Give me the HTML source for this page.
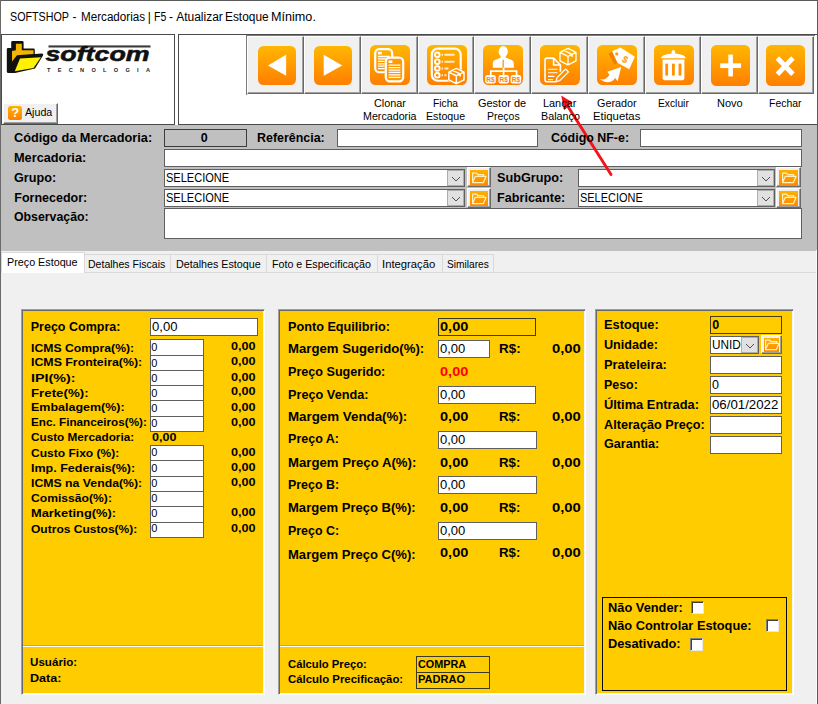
<!DOCTYPE html>
<html lang="pt-BR">
<head>
<meta charset="utf-8">
<title>SOFTSHOP - Mercadorias</title>
<style>
html,body{margin:0;padding:0;}
body{width:818px;height:704px;overflow:hidden;background:#f0f0f0;}
#win{position:relative;width:818px;height:704px;overflow:hidden;background:#f0f0f0;font-family:"Liberation Sans",sans-serif;color:#000;}
#win div,#win svg,#win span.t{position:absolute;box-sizing:border-box;}
.t{white-space:nowrap;font-family:"Liberation Sans",sans-serif;transform-origin:0 0;}
.fld{background:#fff;border:1px solid #5f5f5f;}
.yfld{background:#ffcc00;border:1px solid #3a3a2a;}
.btn{background:#f0f0f0;border-top:1px solid #fff;border-left:1px solid #fff;border-right:1px solid #696969;border-bottom:1px solid #696969;box-shadow:inset -1px -1px 0 #a0a0a0;}
.ico{border-radius:5.5px;background:linear-gradient(#ffb700,#ff9d00 45%,#ff7f00);}
.pan{background:#ffcc00;border-top:1px solid #a0a0a0;border-left:1px solid #a0a0a0;border-right:1px solid #fff;border-bottom:1px solid #fff;box-shadow:inset 1px 1px 0 #66686e,inset -1px -1px 0 #f6f6f6;}
.dd{background:#e1e1e1;border:1px solid #adadad;}
.fico{background:linear-gradient(#ffb000,#ff8a00);}
.chk{background:#fff;border-top:1px solid #808080;border-left:1px solid #808080;border-right:1px solid #e8e8e8;border-bottom:1px solid #e8e8e8;box-shadow:inset 1px 1px 0 #404040;}
.tab{background:#f0f0f0;border:1px solid #d9d9d9;border-bottom:none;}

</style>
</head>
<body>
<div id="win">
<!-- title bar -->
<div style="left:0;top:0;width:818px;height:125px;background:#fff;"></div>
<!-- logo panel -->
<div style="left:1px;top:34px;width:174px;height:91px;border:1px solid #4a4a4a;background:#fff;"></div>
<!-- toolbar panel -->
<div style="left:178px;top:34px;width:640px;height:91px;border:1px solid #4a4a4a;border-right-color:#8a8a8a;background:#fff;"></div>
<!-- LOGO -->
<svg style="left:2px;top:35px;" width="172" height="60" viewBox="2 35 172 60">
  <path d="M6.8 49.2 Q6.8 48 8 48 L11.2 48 L11.2 42.3 Q11.2 41.1 12.5 41.1 L22.4 41.1 Q23.6 41.1 23.6 42.3 L23.6 48.6 L33.5 48.6 Q34.8 48.6 34.8 50 L34.8 53.9 L42 53.5 Q43.8 53.6 43 55.4 L35 68.4 L15 73 L8.5 73 Q6.8 73 6.8 71.5 Z" fill="#111"/>
  <path d="M12 51 L15.9 50.3 L15.9 43.7 L21.8 43.7 L21.8 50.3 L33.5 50.3 L33.5 53.9 L17 55.2 L12 61.5 Z" fill="#f5b400"/>
  <path d="M14.8 71.2 L20 58.6 L40.9 57.2 L33.5 67.9 Z" fill="#fff200"/>
  <rect x="48.5" y="45.4" width="102" height="2.1" fill="#3a3a3a"/>
  <text x="45.5" y="61.3" font-family="Liberation Sans, sans-serif" font-weight="bold" font-style="italic" font-size="20.5" textLength="104" lengthAdjust="spacingAndGlyphs" fill="#111" stroke="#111" stroke-width="0.55">softcom</text>
  <text x="47" y="71.6" font-family="Liberation Sans, sans-serif" font-weight="bold" font-size="5.6" textLength="103" lengthAdjust="spacing" fill="#222">TECNOLOGIA</text>
</svg>
<!-- Ajuda button -->
<div class="btn" style="left:3px;top:103px;width:55px;height:21px;"></div>
<div style="left:8px;top:106px;width:14px;height:14px;border-radius:2.5px;background:linear-gradient(#ffb400,#ff7f00);"></div>
<span class="t" style="left:11.2px;top:106.2px;font-size:13px;line-height:14px;font-weight:bold;color:#fff;">?</span>
<div style="left:246px;top:35px;width:569px;height:60px;border:1px solid #7a7a7a;border-right:none;border-bottom:none;"></div>
<div class="btn" style="left:247px;top:36px;width:57px;height:58px;"></div>
<div class="ico" style="left:258.0px;top:46.3px;width:38px;height:38.5px;"></div>
<svg style="left:258.0px;top:46.3px;" width="38" height="38.5" viewBox="0 0 40 40" preserveAspectRatio="none"><polygon points="10.5,20.2 29.6,9.2 29.6,30.9" fill="#fff"/></svg>
<div class="btn" style="left:304px;top:36px;width:57px;height:58px;"></div>
<div class="ico" style="left:314.1px;top:46.3px;width:38px;height:38.5px;"></div>
<svg style="left:314.1px;top:46.3px;" width="38" height="38.5" viewBox="0 0 40 40" preserveAspectRatio="none"><polygon points="10.2,9.2 29.8,20.2 10.2,30.9" fill="#fff"/></svg>
<div class="btn" style="left:361px;top:36px;width:57px;height:58px;"></div>
<div class="ico" style="left:370.1px;top:44.8px;width:40px;height:40.4px;"></div>
<svg style="left:370.1px;top:44.8px;" width="40" height="40.4" viewBox="0 0 40 40" preserveAspectRatio="none"><rect x="5.2" y="4" width="17" height="23" rx="4" fill="none" stroke="#fff" stroke-width="2.2"/>
<rect x="8" y="6.8" width="3.8" height="2.5" fill="#fff"/>
<path d="M8 11.4H19.6M8 13.8H19.6M8 16.2H14.6M8 18.6H14.6M8 21H14.6M8 23.4H14.6" stroke="#fff" stroke-width="1.3"/>
<rect x="15.8" y="12.5" width="17.4" height="23.5" rx="4" fill="#ff9a00" stroke="#fff" stroke-width="2.2"/>
<rect x="18.6" y="15.3" width="3.8" height="2.5" fill="#fff"/>
<path d="M18.6 20H30.4M18.6 22.4H30.4M18.6 24.8H30.4M18.6 27.2H30.4M18.6 29.6H30.4M18.6 32H30.4" stroke="#fff" stroke-width="1.3"/></svg>
<div class="btn" style="left:418px;top:36px;width:56px;height:58px;"></div>
<div class="ico" style="left:427.0px;top:44.8px;width:40px;height:40.4px;"></div>
<svg style="left:427.0px;top:44.8px;" width="40" height="40.4" viewBox="0 0 40 40" preserveAspectRatio="none"><rect x="4.8" y="3.6" width="28.9" height="31.8" rx="6" fill="none" stroke="#fff" stroke-width="2.2"/>
<circle cx="10.3" cy="9.7" r="2.3" fill="none" stroke="#fff" stroke-width="1.9"/><circle cx="10.3" cy="16.5" r="2.3" fill="none" stroke="#fff" stroke-width="1.9"/>
<circle cx="10.3" cy="23.2" r="2.3" fill="none" stroke="#fff" stroke-width="1.9"/><circle cx="10.3" cy="30" r="2.3" fill="none" stroke="#fff" stroke-width="1.9"/>
<path d="M14.6 9.7H16M17.4 9.7H27.5M14.6 16.5H16M17.4 16.5H27.5M14.6 23.2H16M17.4 23.2H21.5M14.6 30H16M17.4 30H19.5" stroke="#fff" stroke-width="2" opacity=".8"/>
<path d="M29.3 22 L38.2 26.2 V35.2 L29.3 39.4 L20.6 35.2 V26.2 Z" fill="#ff8c00"/>
<path d="M29.3 23.2 L37 26.8 V34.6 L29.3 38.2 L21.8 34.6 V26.8 Z M21.8 26.8 L29.3 30.4 L37 26.8 M29.3 30.4 V38.2 M25.4 25 L33.2 28.6 V31.2" fill="none" stroke="#fff" stroke-width="1.5" stroke-linejoin="round"/></svg>
<div class="btn" style="left:474px;top:36px;width:57px;height:58px;"></div>
<div class="ico" style="left:483.2px;top:44.8px;width:40px;height:40.4px;"></div>
<svg style="left:483.2px;top:44.8px;" width="40" height="40.4" viewBox="0 0 40 40" preserveAspectRatio="none"><ellipse cx="20.2" cy="6.4" rx="4.6" ry="5.3" fill="#fff"/>
<path d="M9.8 22.5 V18.3 Q9.8 15 13.6 14 L17.6 12.6 V10 H22.8 V12.6 L26.8 14 Q30.8 15 30.8 18.3 V22.5 Z" fill="#fff"/>
<path d="M20.2 14.5 V22.5" stroke="#ff9600" stroke-width="1.3"/>
<path d="M7.8 30.5 V25.8 H33.6 V30.5 M20.6 22.5 V30.5" fill="none" stroke="#fff" stroke-width="1.7"/>
<rect x="2.2" y="29.8" width="10.6" height="8.4" rx="2.4" fill="#fff"/><rect x="15.4" y="29.8" width="10.6" height="8.4" rx="2.4" fill="#fff"/><rect x="27.6" y="29.8" width="10.6" height="8.4" rx="2.4" fill="#fff"/>
<text x="7.5" y="36.5" text-anchor="middle" font-family="Liberation Sans, sans-serif" font-weight="bold" font-size="6.6" fill="#ff8400">R$</text>
<text x="20.7" y="36.5" text-anchor="middle" font-family="Liberation Sans, sans-serif" font-weight="bold" font-size="6.6" fill="#ff8400">R$</text>
<text x="32.9" y="36.5" text-anchor="middle" font-family="Liberation Sans, sans-serif" font-weight="bold" font-size="6.6" fill="#ff8400">R$</text></svg>
<div class="btn" style="left:531px;top:36px;width:57px;height:58px;"></div>
<div class="ico" style="left:540.0px;top:44.8px;width:40px;height:40.4px;"></div>
<svg style="left:540.0px;top:44.8px;" width="40" height="40.4" viewBox="0 0 40 40" preserveAspectRatio="none"><path d="M16.4 36.4 H7 Q5 36.4 5 34.4 V15 Q5 13 7 13 H13.6 L20.4 19.8 V26.5 M13.6 13 V19.8 H20.4" fill="none" stroke="#fff" stroke-width="1.6" stroke-linejoin="round"/>
<path d="M8 24H17.5M8 27.5H17.5M8 31H14.5M8 34.2H13" stroke="#fff" stroke-width="1.2"/>
<path d="M16 36.2 L17 32.3 L25.6 23.7 L28.5 26.6 L19.9 35.2 Z" fill="#ff9000" stroke="#fff" stroke-width="1.3" stroke-linejoin="round"/>
<path d="M28 3.4 L36 7.3 V15.7 L28 19.6 L20 15.7 V7.3 Z M20 7.3 L28 11.2 L36 7.3 M28 11.2 V19.6 M24 5.4 L32 9.3 V12" fill="none" stroke="#fff" stroke-width="1.3" stroke-linejoin="round"/></svg>
<div class="btn" style="left:588px;top:36px;width:57px;height:58px;"></div>
<div class="ico" style="left:596.9px;top:44.8px;width:40px;height:40.4px;"></div>
<svg style="left:596.9px;top:44.8px;" width="40" height="40.4" viewBox="0 0 40 40" preserveAspectRatio="none"><polygon points="11.6,8.6 15.2,6.2 20.6,17.6 17.4,19.6" fill="#f08000"/>
<polygon points="15.1,6.3 23.4,2.5 37.9,11.6 32.2,24 20.5,17.5" fill="#fff"/>
<circle cx="19.8" cy="8.9" r="1.6" fill="#ff9a00"/>
<text x="0" y="0" transform="translate(24.2,15.8) rotate(30)" font-family="Liberation Sans, sans-serif" font-weight="bold" font-size="9.5" fill="#ff9a00">$</text>
<path d="M1.8 33 Q8 36.5 12.4 29.5 L10.4 26.4 L24.2 21.8 L20.6 35.8 L18.2 32.6 Q12 41 1.8 33 Z" fill="#fff"/></svg>
<div class="btn" style="left:645px;top:36px;width:56px;height:58px;"></div>
<div class="ico" style="left:654.0px;top:44.8px;width:40px;height:40.4px;"></div>
<svg style="left:654.0px;top:44.8px;" width="40" height="40.4" viewBox="0 0 40 40" preserveAspectRatio="none"><path d="M7 13 Q7 9.6 17.6 8.3 Q17.4 5 19.4 5 Q21.4 5 21.2 8.3 Q31.8 9.6 31.8 13 Z" fill="#fff"/>
<path d="M8.6 14.4 H30.4 V33 Q30.4 34.8 28.6 34.8 H10.4 Q8.6 34.8 8.6 33 Z" fill="#fff"/>
<rect x="11.3" y="18.2" width="2.8" height="12.2" rx="1.2" fill="#ff9200"/><rect x="18" y="18.2" width="2.8" height="12.2" rx="1.2" fill="#ff9200"/><rect x="24.6" y="18.2" width="2.8" height="12.2" rx="1.2" fill="#ff9200"/></svg>
<div class="btn" style="left:701px;top:36px;width:57px;height:58px;"></div>
<div class="ico" style="left:710.6px;top:44.8px;width:39.3px;height:41.2px;"></div>
<svg style="left:710.6px;top:44.8px;" width="39.3" height="41.2" viewBox="0 0 40 40" preserveAspectRatio="none"><rect x="9.4" y="17.8" width="21.2" height="4.6" fill="#fff"/><rect x="17.6" y="9.3" width="4.7" height="21.2" fill="#fff"/></svg>
<div class="btn" style="left:758px;top:36px;width:56px;height:58px;"></div>
<div class="ico" style="left:765.9px;top:44.8px;width:39.3px;height:41.2px;"></div>
<svg style="left:765.9px;top:44.8px;" width="39.3" height="41.2" viewBox="0 0 40 40" preserveAspectRatio="none"><path d="M11.6 12.6 L27.4 28.4 M27.4 12.6 L11.6 28.4" stroke="#fff" stroke-width="5" fill="none"/></svg>
<div style="left:1px;top:125px;width:816px;height:126px;background:#c0c0c0;"></div>
<div style="left:164px;top:129px;width:83px;height:18px;border:1px solid #3c3c3c;background:#c0c0c0;"></div>
<div class="fld" style="left:337px;top:129px;width:201px;height:18px;"></div>
<div class="fld" style="left:640px;top:129px;width:162px;height:18px;"></div>
<div class="fld" style="left:164px;top:149px;width:638px;height:18px;"></div>
<div class="fld" style="left:164px;top:169px;width:301px;height:18px;"></div>
<div class="fld" style="left:164px;top:189px;width:301px;height:18px;"></div>
<div class="fld" style="left:578px;top:169px;width:197px;height:18px;"></div>
<div class="fld" style="left:578px;top:189px;width:197px;height:18px;"></div>
<div class="fld" style="left:164px;top:208px;width:638px;height:31px;"></div>
<div class="dd" style="left:447px;top:170px;width:17px;height:16px;"></div><svg style="left:450.5px;top:175.5px;" width="10" height="6" viewBox="0 0 10 6"><path d="M1 1 L5 5 L9 1" fill="none" stroke="#505050" stroke-width="1"/></svg>
<div class="dd" style="left:447px;top:190px;width:17px;height:16px;"></div><svg style="left:450.5px;top:195.5px;" width="10" height="6" viewBox="0 0 10 6"><path d="M1 1 L5 5 L9 1" fill="none" stroke="#505050" stroke-width="1"/></svg>
<div class="dd" style="left:757px;top:170px;width:17px;height:16px;"></div><svg style="left:760.5px;top:175.5px;" width="10" height="6" viewBox="0 0 10 6"><path d="M1 1 L5 5 L9 1" fill="none" stroke="#505050" stroke-width="1"/></svg>
<div class="dd" style="left:757px;top:190px;width:17px;height:16px;"></div><svg style="left:760.5px;top:195.5px;" width="10" height="6" viewBox="0 0 10 6"><path d="M1 1 L5 5 L9 1" fill="none" stroke="#505050" stroke-width="1"/></svg>
<div class="btn" style="left:467px;top:167px;width:24px;height:20px;"></div><div class="fico" style="left:470px;top:169.5px;width:18px;height:15px;"></div><svg style="left:470.0px;top:169.5px;" width="18" height="15" viewBox="0 0 18 15"><path d="M2.6 12.6 V3.2 H6.6 L7.8 4.6 H13.6 V6.4 M2.6 12.6 L5.2 6.4 H16 L13.4 12.6 Z" fill="none" stroke="#fff2c0" stroke-width="1.2" stroke-linejoin="round"/></svg>
<div class="btn" style="left:467px;top:188px;width:24px;height:20px;"></div><div class="fico" style="left:470px;top:190.5px;width:18px;height:15px;"></div><svg style="left:470.0px;top:190.5px;" width="18" height="15" viewBox="0 0 18 15"><path d="M2.6 12.6 V3.2 H6.6 L7.8 4.6 H13.6 V6.4 M2.6 12.6 L5.2 6.4 H16 L13.4 12.6 Z" fill="none" stroke="#fff2c0" stroke-width="1.2" stroke-linejoin="round"/></svg>
<div class="btn" style="left:776px;top:167px;width:25px;height:20px;"></div><div class="fico" style="left:779px;top:169.5px;width:19px;height:15px;"></div><svg style="left:779.5px;top:169.5px;" width="18" height="15" viewBox="0 0 18 15"><path d="M2.6 12.6 V3.2 H6.6 L7.8 4.6 H13.6 V6.4 M2.6 12.6 L5.2 6.4 H16 L13.4 12.6 Z" fill="none" stroke="#fff2c0" stroke-width="1.2" stroke-linejoin="round"/></svg>
<div class="btn" style="left:776px;top:188px;width:25px;height:20px;"></div><div class="fico" style="left:779px;top:190.5px;width:19px;height:15px;"></div><svg style="left:779.5px;top:190.5px;" width="18" height="15" viewBox="0 0 18 15"><path d="M2.6 12.6 V3.2 H6.6 L7.8 4.6 H13.6 V6.4 M2.6 12.6 L5.2 6.4 H16 L13.4 12.6 Z" fill="none" stroke="#fff2c0" stroke-width="1.2" stroke-linejoin="round"/></svg>
<div style="left:1px;top:251px;width:816px;height:22px;background:#f0f0f0;"></div>
<div class="tab" style="left:84px;top:254px;width:87px;height:19px;"></div>
<div class="tab" style="left:170px;top:254px;width:97px;height:19px;"></div>
<div class="tab" style="left:266px;top:254px;width:112px;height:19px;"></div>
<div class="tab" style="left:377px;top:254px;width:65.5px;height:19px;"></div>
<div class="tab" style="left:441.5px;top:254px;width:52.0px;height:19px;"></div>
<div style="left:1px;top:252px;width:84px;height:21px;background:#fff;border:1px solid #d9d9d9;border-bottom:none;"></div>
<div style="left:85px;top:272px;width:732px;height:1px;background:#dadada;"></div>
<div class="pan" style="left:21px;top:309px;width:244px;height:386px;"></div>
<div class="pan" style="left:278px;top:309px;width:308px;height:386px;"></div>
<div class="pan" style="left:595px;top:309px;width:199px;height:386px;"></div>
<div style="left:23px;top:645px;width:240px;height:1px;background:#a6a6a6;"></div><div style="left:23px;top:646px;width:240px;height:1px;background:#fff;"></div>
<div style="left:280px;top:645px;width:304px;height:1px;background:#a6a6a6;"></div><div style="left:280px;top:646px;width:304px;height:1px;background:#fff;"></div>
<div class="fld" style="left:150px;top:318px;width:108px;height:18px;"></div>
<div class="fld" style="left:150px;top:339px;width:54px;height:17px;"></div>
<div class="fld" style="left:150px;top:355px;width:54px;height:16px;"></div>
<div class="fld" style="left:150px;top:370px;width:54px;height:16px;"></div>
<div class="fld" style="left:150px;top:385px;width:54px;height:16px;"></div>
<div class="fld" style="left:150px;top:400px;width:54px;height:17px;"></div>
<div class="fld" style="left:150px;top:416px;width:54px;height:16px;"></div>
<div class="fld" style="left:150px;top:445px;width:54px;height:16px;"></div>
<div class="fld" style="left:150px;top:460px;width:54px;height:17px;"></div>
<div class="fld" style="left:150px;top:476px;width:54px;height:16px;"></div>
<div class="fld" style="left:150px;top:491px;width:54px;height:16px;"></div>
<div class="fld" style="left:150px;top:506px;width:54px;height:17px;"></div>
<div class="fld" style="left:150px;top:522px;width:54px;height:16px;"></div>
<div class="yfld" style="left:438px;top:318px;width:98px;height:18px;"></div>
<div class="fld" style="left:438px;top:340px;width:52px;height:18px;"></div>
<div class="fld" style="left:438px;top:386px;width:98px;height:18px;"></div>
<div class="fld" style="left:438px;top:431px;width:99px;height:18px;"></div>
<div class="fld" style="left:438px;top:476px;width:99px;height:18px;"></div>
<div class="fld" style="left:438px;top:522px;width:99px;height:18px;"></div>
<div class="yfld" style="left:416px;top:656px;width:74px;height:17px;"></div>
<div class="yfld" style="left:416px;top:672px;width:74px;height:17px;"></div>
<div class="yfld" style="left:710px;top:316px;width:72px;height:18px;border-color:#4a3d10;"></div>
<div class="fld" style="left:710px;top:336px;width:49px;height:18px;"></div>
<div class="dd" style="left:741px;top:337px;width:17px;height:16px;"></div><svg style="left:744.5px;top:342.5px;" width="10" height="6" viewBox="0 0 10 6"><path d="M1 1 L5 5 L9 1" fill="none" stroke="#505050" stroke-width="1"/></svg>
<div class="btn" style="left:761px;top:335px;width:21px;height:19px;"></div><div class="fico" style="left:764px;top:337.5px;width:15px;height:14px;"></div><svg style="left:762.5px;top:337.0px;" width="18" height="15" viewBox="0 0 18 15"><path d="M2.6 12.6 V3.2 H6.6 L7.8 4.6 H13.6 V6.4 M2.6 12.6 L5.2 6.4 H16 L13.4 12.6 Z" fill="none" stroke="#fff2c0" stroke-width="1.2" stroke-linejoin="round"/></svg>
<div class="fld" style="left:710px;top:356px;width:72px;height:18px;"></div>
<div class="fld" style="left:710px;top:376px;width:72px;height:18px;"></div>
<div class="fld" style="left:710px;top:396px;width:72px;height:18px;"></div>
<div class="fld" style="left:710px;top:416px;width:72px;height:18px;"></div>
<div class="fld" style="left:710px;top:436px;width:72px;height:18px;"></div>
<div style="left:602px;top:597px;width:185px;height:94px;border:1px solid #0a0800;"></div>
<div class="chk" style="left:691px;top:601px;width:13px;height:13px;"></div>
<div class="chk" style="left:766px;top:619px;width:13px;height:13px;"></div>
<div class="chk" style="left:690px;top:638px;width:13px;height:13px;"></div>
<div style="left:0;top:0;width:818px;height:1px;background:#5a5a5a;"></div>
<div style="left:0;top:0;width:1px;height:704px;background:#6a6a6a;"></div>
<div style="left:817px;top:0;width:1px;height:704px;background:#5a5a5a;"></div>
<div style="left:816px;top:250px;width:1px;height:454px;background:#fafafa;"></div>
<svg style="left:540px;top:85px;" width="90" height="100" viewBox="540 85 90 100"><path d="M611 174.6 L567 105" stroke="#f5121a" stroke-width="2.9" stroke-linecap="round" fill="none"/><polygon points="561.2,95.6 572.6,102.6 564.2,110.2" fill="#f5121a"/></svg>
<!-- text layer -->
<div id="caption" style="left:0;top:0;width:400px;height:33px;"><span class="t" style="left:10.36px;top:11.14px;font-size:12px;line-height:12px;transform:scaleX(0.8935);">SOFTSHOP</span> <span class="t" style="left:72.48px;top:11.14px;font-size:12px;line-height:12px;">-</span> <span class="t" style="left:80.50px;top:11.14px;font-size:12px;line-height:12px;transform:scaleX(0.9707);">Mercadorias</span> <span class="t" style="left:147.68px;top:11.14px;font-size:12px;line-height:12px;">|</span> <span class="t" style="left:153.77px;top:11.14px;font-size:12px;line-height:12px;transform:scaleX(0.8747);">F5</span> <span class="t" style="left:168.88px;top:11.14px;font-size:12px;line-height:12px;">-</span> <span class="t" style="left:176.18px;top:11.14px;font-size:12px;line-height:12px;">Atualizar</span> <span class="t" style="left:225.29px;top:11.14px;font-size:12px;line-height:12px;transform:scaleX(0.9905);">Estoque</span> <span class="t" style="left:271.44px;top:11.14px;font-size:12px;line-height:12px;transform:scaleX(1.0522);">Mínimo.</span></div>
<span class="t" style="left:373.85px;top:98.29px;font-size:11px;line-height:11px;transform:scaleX(0.9844);">Clonar</span>
<span class="t" style="left:363.16px;top:111.09px;font-size:11px;line-height:11px;transform:scaleX(0.9719);">Mercadoria</span>
<span class="t" style="left:433.39px;top:98.29px;font-size:11px;line-height:11px;transform:scaleX(0.9302);">Ficha</span>
<span class="t" style="left:426.36px;top:111.09px;font-size:11px;line-height:11px;transform:scaleX(0.9679);">Estoque</span>
<span class="t" style="left:477.94px;top:98.29px;font-size:11px;line-height:11px;transform:scaleX(0.9959);">Gestor de</span>
<span class="t" style="left:487.17px;top:111.09px;font-size:11px;line-height:11px;transform:scaleX(0.9535);">Preços</span>
<span class="t" style="left:543.35px;top:98.29px;font-size:11px;line-height:11px;transform:scaleX(0.9901);">Lançar</span>
<span class="t" style="left:540.55px;top:111.09px;font-size:11px;line-height:11px;transform:scaleX(0.9780);">Balanço</span>
<span class="t" style="left:596.50px;top:98.29px;font-size:11px;line-height:11px;transform:scaleX(0.9811);">Gerador</span>
<span class="t" style="left:593.02px;top:111.09px;font-size:11px;line-height:11px;transform:scaleX(1.0324);">Etiquetas</span>
<span class="t" style="left:657.78px;top:98.29px;font-size:11px;line-height:11px;transform:scaleX(0.9339);">Excluir</span>
<span class="t" style="left:716.99px;top:98.29px;font-size:11px;line-height:11px;">Novo</span>
<span class="t" style="left:769.12px;top:98.29px;font-size:11px;line-height:11px;transform:scaleX(0.9505);">Fechar</span>
<span class="t" style="left:25.36px;top:106.89px;font-size:11px;line-height:11px;transform:scaleX(0.9694);">Ajuda</span>
<span class="t" style="left:14.24px;top:132.02px;font-size:12.5px;line-height:12.5px;transform:scaleX(1.0199);font-weight:bold;">Código da Mercadoria:</span>
<span class="t" style="left:14.24px;top:151.52px;font-size:12.5px;line-height:12.5px;transform:scaleX(1.0193);font-weight:bold;">Mercadoria:</span>
<span class="t" style="left:14.24px;top:171.52px;font-size:12.5px;line-height:12.5px;transform:scaleX(1.0107);font-weight:bold;">Grupo:</span>
<span class="t" style="left:14.25px;top:191.52px;font-size:12.5px;line-height:12.5px;font-weight:bold;">Fornecedor:</span>
<span class="t" style="left:14.26px;top:210.52px;font-size:12.5px;line-height:12.5px;transform:scaleX(0.9861);font-weight:bold;">Observação:</span>
<span class="t" style="left:257.25px;top:132.02px;font-size:12.5px;line-height:12.5px;transform:scaleX(0.9941);font-weight:bold;">Referência:</span>
<span class="t" style="left:550.65px;top:132.02px;font-size:12.5px;line-height:12.5px;transform:scaleX(0.9952);font-weight:bold;">Código NF-e:</span>
<span class="t" style="left:497.24px;top:171.52px;font-size:12.5px;line-height:12.5px;transform:scaleX(1.0147);font-weight:bold;">SubGrupo:</span>
<span class="t" style="left:497.24px;top:191.52px;font-size:12.5px;line-height:12.5px;transform:scaleX(1.0123);font-weight:bold;">Fabricante:</span>
<span class="t" style="left:200.85px;top:132.32px;font-size:12.5px;line-height:12.5px;font-weight:bold;">0</span>
<span class="t" style="left:165.64px;top:172.44px;font-size:12px;line-height:12px;transform:scaleX(0.9203);">SELECIONE</span>
<span class="t" style="left:165.64px;top:192.44px;font-size:12px;line-height:12px;transform:scaleX(0.9203);">SELECIONE</span>
<span class="t" style="left:579.54px;top:192.44px;font-size:12px;line-height:12px;transform:scaleX(0.9128);">SELECIONE</span>
<span class="t" style="left:6.65px;top:256.99px;font-size:11px;line-height:11px;transform:scaleX(0.9783);">Preço Estoque</span>
<span class="t" style="left:87.77px;top:258.69px;font-size:11px;line-height:11px;transform:scaleX(0.9574);">Detalhes Fiscais</span>
<span class="t" style="left:175.96px;top:258.69px;font-size:11px;line-height:11px;transform:scaleX(0.9752);">Detalhes Estoque</span>
<span class="t" style="left:271.56px;top:258.69px;font-size:11px;line-height:11px;transform:scaleX(0.9692);">Foto e Especificação</span>
<span class="t" style="left:382.32px;top:258.69px;font-size:11px;line-height:11px;transform:scaleX(1.0244);">Integração</span>
<span class="t" style="left:446.79px;top:258.69px;font-size:11px;line-height:11px;transform:scaleX(0.9245);">Similares</span>
<span class="t" style="left:30.75px;top:320.82px;font-size:12.5px;line-height:12.5px;font-weight:bold;">Preço Compra:</span>
<span class="t" style="left:151.91px;top:321.44px;font-size:12px;line-height:12px;transform:scaleX(1.0904);">0,00</span>
<span class="t" style="left:30.77px;top:342.67px;font-size:11.5px;line-height:11.5px;transform:scaleX(1.0622);font-weight:bold;">ICMS Compra(%):</span>
<span class="t" style="left:151.24px;top:342.29px;font-size:11px;line-height:11px;">0</span>
<span class="t" style="left:230.64px;top:341.37px;font-size:11.5px;line-height:11.5px;transform:scaleX(1.0994);font-weight:bold;">0,00</span>
<span class="t" style="left:30.76px;top:356.87px;font-size:11.5px;line-height:11.5px;transform:scaleX(1.0742);font-weight:bold;">ICMS Fronteira(%):</span>
<span class="t" style="left:151.24px;top:357.69px;font-size:11px;line-height:11px;">0</span>
<span class="t" style="left:230.64px;top:356.47px;font-size:11.5px;line-height:11.5px;transform:scaleX(1.0994);font-weight:bold;">0,00</span>
<span class="t" style="left:30.64px;top:372.57px;font-size:11.5px;line-height:11.5px;transform:scaleX(1.2470);font-weight:bold;">IPI(%):</span>
<span class="t" style="left:151.24px;top:372.79px;font-size:11px;line-height:11px;">0</span>
<span class="t" style="left:230.64px;top:371.57px;font-size:11.5px;line-height:11.5px;transform:scaleX(1.0994);font-weight:bold;">0,00</span>
<span class="t" style="left:30.70px;top:387.97px;font-size:11.5px;line-height:11.5px;transform:scaleX(1.1555);font-weight:bold;">Frete(%):</span>
<span class="t" style="left:151.24px;top:387.89px;font-size:11px;line-height:11px;">0</span>
<span class="t" style="left:230.64px;top:386.47px;font-size:11.5px;line-height:11.5px;transform:scaleX(1.0994);font-weight:bold;">0,00</span>
<span class="t" style="left:30.75px;top:402.47px;font-size:11.5px;line-height:11.5px;transform:scaleX(1.0860);font-weight:bold;">Embalagem(%):</span>
<span class="t" style="left:151.24px;top:403.09px;font-size:11px;line-height:11px;">0</span>
<span class="t" style="left:230.64px;top:401.67px;font-size:11.5px;line-height:11.5px;transform:scaleX(1.0994);font-weight:bold;">0,00</span>
<span class="t" style="left:30.80px;top:417.37px;font-size:11.5px;line-height:11.5px;transform:scaleX(1.0190);font-weight:bold;">Enc. Financeiros(%):</span>
<span class="t" style="left:151.24px;top:418.29px;font-size:11px;line-height:11px;">0</span>
<span class="t" style="left:230.64px;top:416.87px;font-size:11.5px;line-height:11.5px;transform:scaleX(1.0994);font-weight:bold;">0,00</span>
<span class="t" style="left:30.78px;top:447.57px;font-size:11.5px;line-height:11.5px;transform:scaleX(1.0464);font-weight:bold;">Custo Fixo (%):</span>
<span class="t" style="left:151.24px;top:447.49px;font-size:11px;line-height:11px;">0</span>
<span class="t" style="left:230.64px;top:446.57px;font-size:11.5px;line-height:11.5px;transform:scaleX(1.0994);font-weight:bold;">0,00</span>
<span class="t" style="left:30.75px;top:462.77px;font-size:11.5px;line-height:11.5px;transform:scaleX(1.0870);font-weight:bold;">Imp. Federais(%):</span>
<span class="t" style="left:151.24px;top:462.69px;font-size:11px;line-height:11px;">0</span>
<span class="t" style="left:230.64px;top:461.77px;font-size:11.5px;line-height:11.5px;transform:scaleX(1.0994);font-weight:bold;">0,00</span>
<span class="t" style="left:30.76px;top:477.67px;font-size:11.5px;line-height:11.5px;transform:scaleX(1.0674);font-weight:bold;">ICMS na Venda(%):</span>
<span class="t" style="left:151.24px;top:477.79px;font-size:11px;line-height:11px;">0</span>
<span class="t" style="left:230.64px;top:476.87px;font-size:11.5px;line-height:11.5px;transform:scaleX(1.0994);font-weight:bold;">0,00</span>
<span class="t" style="left:30.77px;top:493.47px;font-size:11.5px;line-height:11.5px;transform:scaleX(1.0557);font-weight:bold;">Comissão(%):</span>
<span class="t" style="left:151.24px;top:493.29px;font-size:11px;line-height:11px;">0</span>
<span class="t" style="left:30.73px;top:508.47px;font-size:11.5px;line-height:11.5px;transform:scaleX(1.1185);font-weight:bold;">Marketing(%):</span>
<span class="t" style="left:151.24px;top:508.29px;font-size:11px;line-height:11px;">0</span>
<span class="t" style="left:230.64px;top:507.47px;font-size:11.5px;line-height:11.5px;transform:scaleX(1.0994);font-weight:bold;">0,00</span>
<span class="t" style="left:30.78px;top:523.57px;font-size:11.5px;line-height:11.5px;transform:scaleX(1.0468);font-weight:bold;">Outros Custos(%):</span>
<span class="t" style="left:151.24px;top:523.49px;font-size:11px;line-height:11px;">0</span>
<span class="t" style="left:230.64px;top:522.57px;font-size:11.5px;line-height:11.5px;transform:scaleX(1.0994);font-weight:bold;">0,00</span>
<span class="t" style="left:30.80px;top:432.17px;font-size:11.5px;line-height:11.5px;transform:scaleX(1.0212);font-weight:bold;">Custo Mercadoria:</span>
<span class="t" style="left:151.85px;top:432.07px;font-size:11.5px;line-height:11.5px;transform:scaleX(1.0899);font-weight:bold;">0,00</span>
<span class="t" style="left:29.60px;top:657.37px;font-size:11.5px;line-height:11.5px;transform:scaleX(1.0094);font-weight:bold;">Usuário:</span>
<span class="t" style="left:29.54px;top:673.27px;font-size:11.5px;line-height:11.5px;transform:scaleX(1.0955);font-weight:bold;">Data:</span>
<span class="t" style="left:288.04px;top:321.32px;font-size:12.5px;line-height:12.5px;transform:scaleX(1.0132);font-weight:bold;">Ponto Equilibrio:</span>
<span class="t" style="left:288.01px;top:342.82px;font-size:12.5px;line-height:12.5px;transform:scaleX(1.0541);font-weight:bold;">Margem Sugerido(%):</span>
<span class="t" style="left:288.04px;top:365.52px;font-size:12.5px;line-height:12.5px;transform:scaleX(1.0079);font-weight:bold;">Preço Sugerido:</span>
<span class="t" style="left:288.04px;top:388.62px;font-size:12.5px;line-height:12.5px;transform:scaleX(1.0167);font-weight:bold;">Preço Venda:</span>
<span class="t" style="left:288.00px;top:411.32px;font-size:12.5px;line-height:12.5px;transform:scaleX(1.0667);font-weight:bold;">Margem Venda(%):</span>
<span class="t" style="left:288.05px;top:433.42px;font-size:12.5px;line-height:12.5px;font-weight:bold;">Preço A:</span>
<span class="t" style="left:288.01px;top:457.42px;font-size:12.5px;line-height:12.5px;transform:scaleX(1.0532);font-weight:bold;">Margem Preço A(%):</span>
<span class="t" style="left:288.05px;top:478.52px;font-size:12.5px;line-height:12.5px;transform:scaleX(0.9939);font-weight:bold;">Preço B:</span>
<span class="t" style="left:288.02px;top:502.42px;font-size:12.5px;line-height:12.5px;transform:scaleX(1.0443);font-weight:bold;">Margem Preço B(%):</span>
<span class="t" style="left:288.05px;top:524.62px;font-size:12.5px;line-height:12.5px;transform:scaleX(0.9939);font-weight:bold;">Preço C:</span>
<span class="t" style="left:288.02px;top:548.52px;font-size:12.5px;line-height:12.5px;transform:scaleX(1.0443);font-weight:bold;">Margem Preço C(%):</span>
<span class="t" style="left:439.93px;top:320.82px;font-size:12.5px;line-height:12.5px;transform:scaleX(1.1644);font-weight:bold;">0,00</span>
<span class="t" style="left:440.02px;top:343.24px;font-size:12px;line-height:12px;transform:scaleX(1.0858);">0,00</span>
<span class="t" style="left:499.00px;top:342.62px;font-size:12.5px;line-height:12.5px;transform:scaleX(1.0720);font-weight:bold;">R$:</span>
<span class="t" style="left:551.81px;top:342.62px;font-size:12.5px;line-height:12.5px;transform:scaleX(1.1863);font-weight:bold;">0,00</span>
<span class="t" style="left:439.93px;top:365.52px;font-size:12.5px;line-height:12.5px;transform:scaleX(1.1644);font-weight:bold;color:#ff0000;">0,00</span>
<span class="t" style="left:440.02px;top:388.84px;font-size:12px;line-height:12px;transform:scaleX(1.0858);">0,00</span>
<span class="t" style="left:439.93px;top:410.52px;font-size:12.5px;line-height:12.5px;transform:scaleX(1.1644);font-weight:bold;">0,00</span>
<span class="t" style="left:499.20px;top:410.72px;font-size:12.5px;line-height:12.5px;transform:scaleX(1.0613);font-weight:bold;">R$:</span>
<span class="t" style="left:551.81px;top:410.52px;font-size:12.5px;line-height:12.5px;transform:scaleX(1.1863);font-weight:bold;">0,00</span>
<span class="t" style="left:439.93px;top:456.92px;font-size:12.5px;line-height:12.5px;transform:scaleX(1.1644);font-weight:bold;">0,00</span>
<span class="t" style="left:499.20px;top:457.12px;font-size:12.5px;line-height:12.5px;transform:scaleX(1.0613);font-weight:bold;">R$:</span>
<span class="t" style="left:551.81px;top:456.92px;font-size:12.5px;line-height:12.5px;transform:scaleX(1.1863);font-weight:bold;">0,00</span>
<span class="t" style="left:439.93px;top:501.72px;font-size:12.5px;line-height:12.5px;transform:scaleX(1.1644);font-weight:bold;">0,00</span>
<span class="t" style="left:499.20px;top:501.92px;font-size:12.5px;line-height:12.5px;transform:scaleX(1.0613);font-weight:bold;">R$:</span>
<span class="t" style="left:551.81px;top:501.72px;font-size:12.5px;line-height:12.5px;transform:scaleX(1.1863);font-weight:bold;">0,00</span>
<span class="t" style="left:439.93px;top:547.22px;font-size:12.5px;line-height:12.5px;transform:scaleX(1.1644);font-weight:bold;">0,00</span>
<span class="t" style="left:499.20px;top:547.42px;font-size:12.5px;line-height:12.5px;transform:scaleX(1.0613);font-weight:bold;">R$:</span>
<span class="t" style="left:551.81px;top:547.22px;font-size:12.5px;line-height:12.5px;transform:scaleX(1.1863);font-weight:bold;">0,00</span>
<span class="t" style="left:440.02px;top:433.84px;font-size:12px;line-height:12px;transform:scaleX(1.0858);">0,00</span>
<span class="t" style="left:440.02px;top:478.94px;font-size:12px;line-height:12px;transform:scaleX(1.0858);">0,00</span>
<span class="t" style="left:440.02px;top:524.64px;font-size:12px;line-height:12px;transform:scaleX(1.0858);">0,00</span>
<span class="t" style="left:287.72px;top:658.87px;font-size:11.5px;line-height:11.5px;transform:scaleX(0.9791);font-weight:bold;">Cálculo Preço:</span>
<span class="t" style="left:287.72px;top:674.47px;font-size:11.5px;line-height:11.5px;transform:scaleX(0.9900);font-weight:bold;">Cálculo Precificação:</span>
<span class="t" style="left:418.05px;top:658.87px;font-size:11.5px;line-height:11.5px;transform:scaleX(0.9428);font-weight:bold;">COMPRA</span>
<span class="t" style="left:418.04px;top:674.47px;font-size:11.5px;line-height:11.5px;transform:scaleX(0.9600);font-weight:bold;">PADRAO</span>
<span class="t" style="left:603.73px;top:318.72px;font-size:12.5px;line-height:12.5px;transform:scaleX(1.0234);font-weight:bold;">Estoque:</span>
<span class="t" style="left:603.74px;top:338.82px;font-size:12.5px;line-height:12.5px;transform:scaleX(1.0080);font-weight:bold;">Unidade:</span>
<span class="t" style="left:603.73px;top:358.82px;font-size:12.5px;line-height:12.5px;transform:scaleX(1.0276);font-weight:bold;">Prateleira:</span>
<span class="t" style="left:603.76px;top:378.62px;font-size:12.5px;line-height:12.5px;transform:scaleX(0.9924);font-weight:bold;">Peso:</span>
<span class="t" style="left:603.73px;top:398.72px;font-size:12.5px;line-height:12.5px;transform:scaleX(1.0276);font-weight:bold;">Última Entrada:</span>
<span class="t" style="left:603.74px;top:418.82px;font-size:12.5px;line-height:12.5px;transform:scaleX(1.0137);font-weight:bold;">Alteração Preço:</span>
<span class="t" style="left:603.74px;top:438.32px;font-size:12.5px;line-height:12.5px;transform:scaleX(1.0077);font-weight:bold;">Garantia:</span>
<span class="t" style="left:712.25px;top:319.22px;font-size:12.5px;line-height:12.5px;font-weight:bold;">0</span>
<span class="t" style="left:711.89px;top:339.02px;font-size:12.5px;line-height:12.5px;transform:scaleX(0.9428);">UNID</span>
<span class="t" style="left:712.05px;top:379.02px;font-size:12.5px;line-height:12.5px;">0</span>
<span class="t" style="left:711.81px;top:399.02px;font-size:12.5px;line-height:12.5px;transform:scaleX(1.0596);">06/01/2022</span>
<span class="t" style="left:607.93px;top:601.52px;font-size:12.5px;line-height:12.5px;transform:scaleX(1.0261);font-weight:bold;">Não Vender:</span>
<span class="t" style="left:607.93px;top:619.62px;font-size:12.5px;line-height:12.5px;transform:scaleX(1.0238);font-weight:bold;">Não Controlar Estoque:</span>
<span class="t" style="left:607.93px;top:637.72px;font-size:12.5px;line-height:12.5px;transform:scaleX(1.0237);font-weight:bold;">Desativado:</span>
</div>
</body>
</html>
